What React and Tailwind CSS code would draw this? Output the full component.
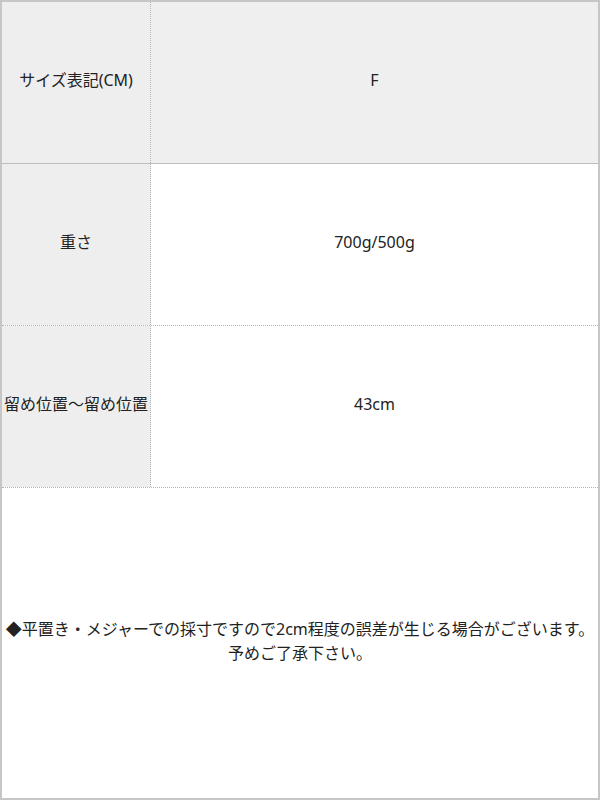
const rows = [
  { label: "サイズ表記(CM)", value: "F", gray: true, solid: true },
  { label: "重さ", value: "700g/500g", gray: false, solid: false },
  { label: "留め位置〜留め位置", value: "43cm", gray: false, solid: false },
];

export default function App() {
  return (
    <div
      className="w-[600px] h-[800px] border-2 border-[#c6c6c6] bg-white flex flex-col text-[16px] text-[#222] leading-6"
      style={{ fontFamily: '"Noto Sans", "Noto Sans CJK JP", sans-serif' }}
    >
      {rows.map((row, i) => (
        <div
          key={i}
          className={`flex h-[162px] shrink-0 border-b ${
            row.solid ? "border-solid border-[#bdbdbd]" : "border-dotted border-[#b5b5b5]"
          }`}
        >
          <div className="w-[149px] shrink-0 bg-[#eeeeee] border-r border-dotted border-[#b5b5b5] flex items-center justify-center whitespace-nowrap pb-[5px]">
            {row.label}
          </div>
          <div
            className={`flex-1 flex items-center justify-center pb-[5px] ${
              row.gray ? "bg-[#efefef]" : "bg-white"
            }`}
          >
            {row.value}
          </div>
        </div>
      ))}

      {/* note */}
      <div className="flex-1 flex flex-col items-center justify-center text-center pb-[4px]">
        <p className="whitespace-nowrap">◆平置き・メジャーでの採寸ですので2cm程度の誤差が生じる場合がございます。</p>
        <p>予めご了承下さい。</p>
      </div>
    </div>
  );
}
